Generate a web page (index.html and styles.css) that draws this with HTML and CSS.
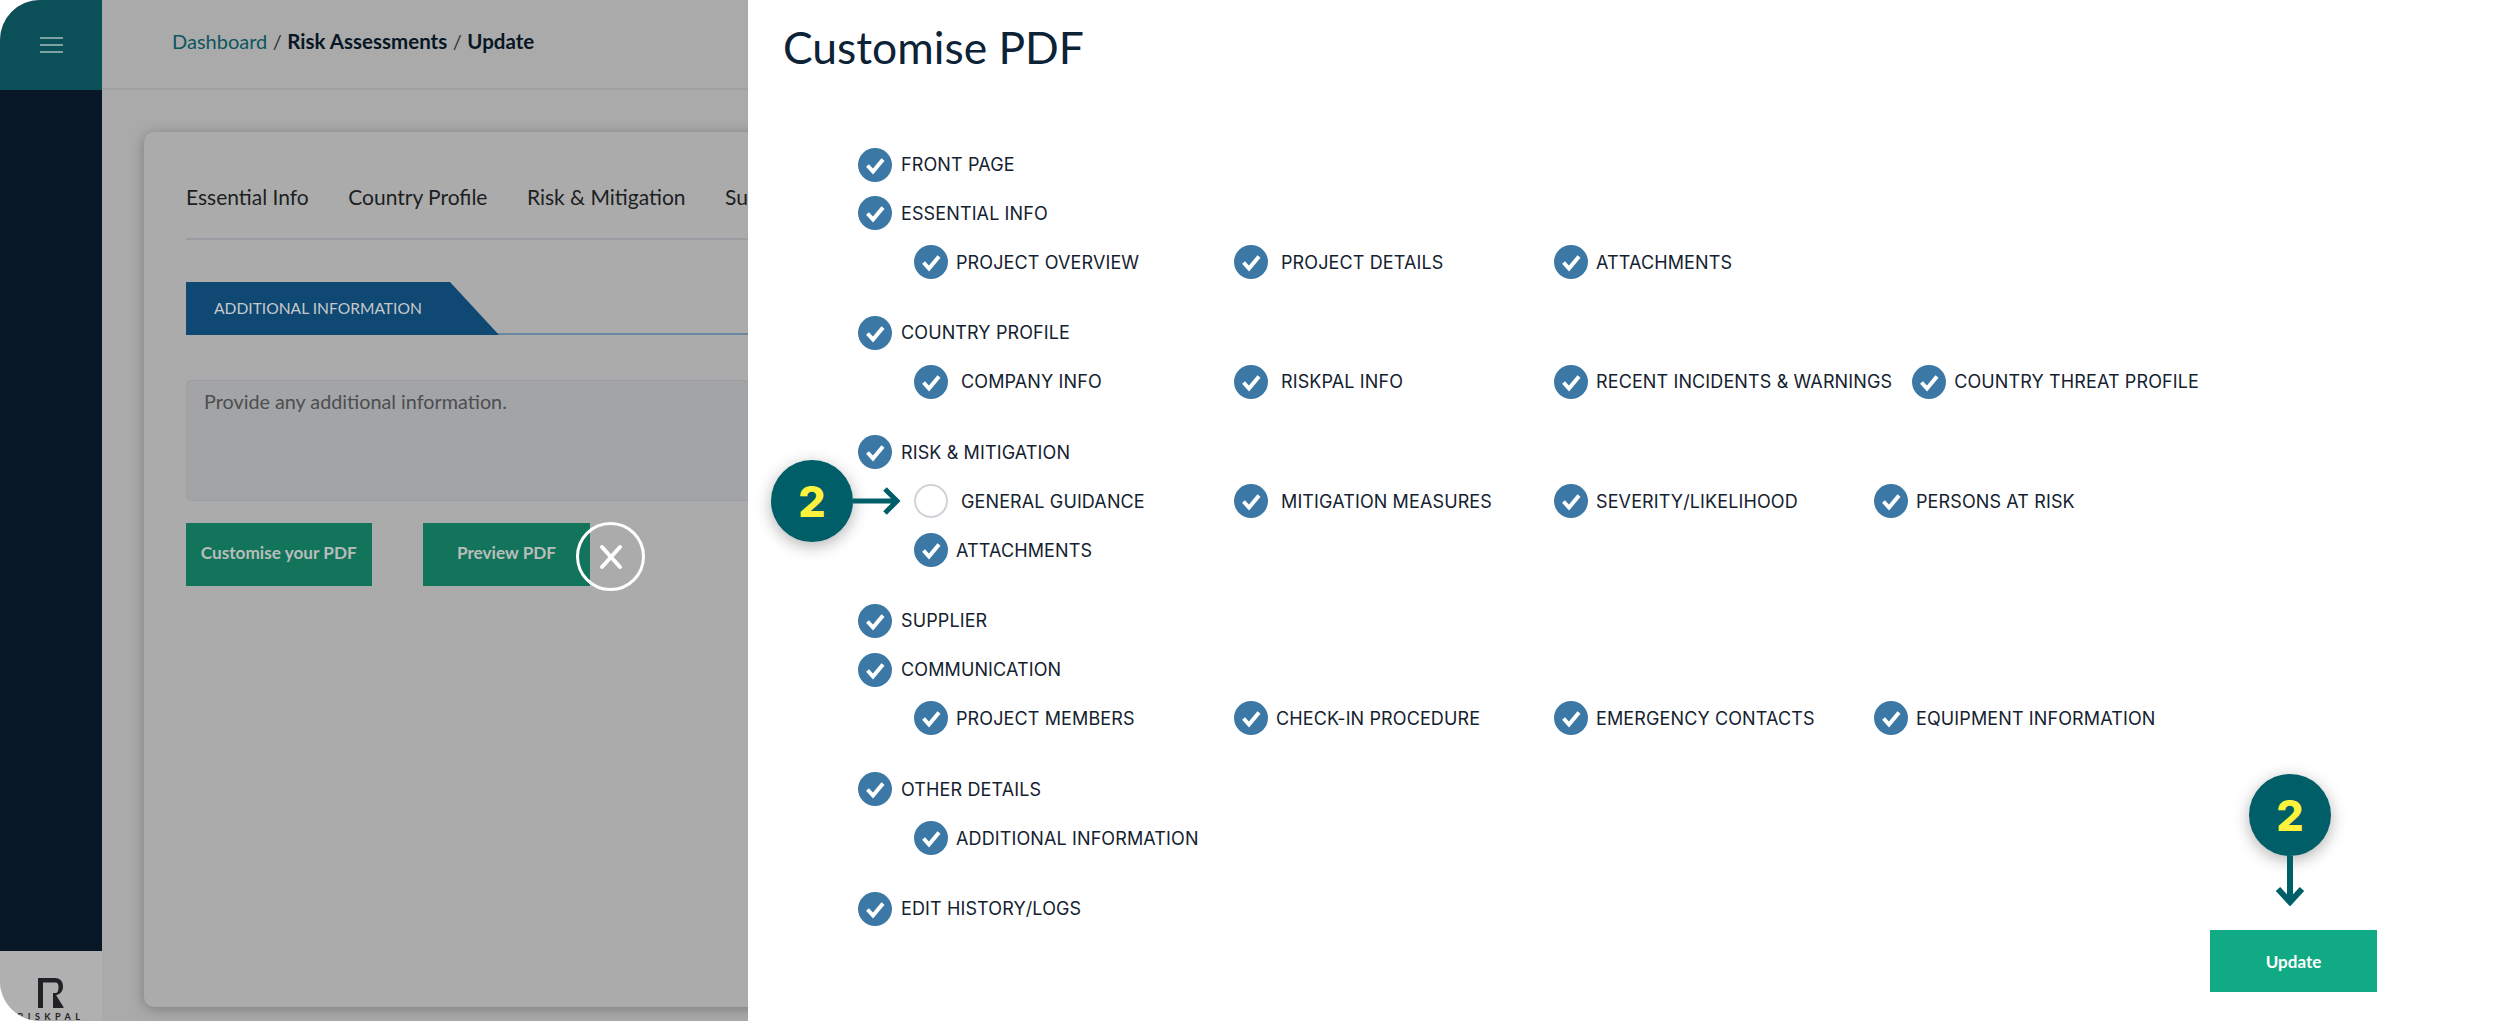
FILE: index.html
```html
<!DOCTYPE html>
<html lang="en">
<head>
  <meta charset="UTF-8">
  <title>Customise PDF</title>
  <link rel="stylesheet" href="styles.css">
</head>
<body>
  <div class="app">
    <!-- Left rail -->
    <aside class="sidebar">
      <div class="sidebar-head">
        <div class="burger"><span></span><span></span><span></span></div>
      </div>
      <div class="sidebar-fill"></div>
      <div class="sidebar-logo">
        <svg class="logo-mark" width="26" height="30" viewBox="0 0 26 30">
          <path d="M0 0H17C22.5 0 25 4 25 8.500C25 13 22.500 16.500 18 17L25.500 29V30H15V15H18C20 15 20.500 11.500 20.500 8.500C20.500 6 19.500 4.500 17 4.500H5V30H0Z" fill="#202226"/>
        </svg>
        <span class="logo-text">RISKPAL</span>
      </div>
    </aside>

    <!-- Page behind the drawer -->
    <main class="main">
      <div class="topbar">
        <a class="crumb-link">Dashboard</a>
        <span class="crumb-sep">/</span>
        <b>Risk Assessments</b>
        <span class="crumb-sep">/</span>
        <b>Update</b>
      </div>
      <section class="card">
        <nav class="tabs">
          <span>Essential Info</span>
          <span>Country Profile</span>
          <span>Risk &amp; Mitigation</span>
          <span>Supplier</span>
        </nav>
        <div class="section-head">
          <div class="section-tab">ADDITIONAL INFORMATION</div>
        </div>
        <div class="notes">Provide any additional information.</div>
        <div class="actions">
          <button class="btn-dim btn-customise">Customise your PDF</button>
          <button class="btn-dim btn-preview">Preview PDF</button>
        </div>
      </section>
    </main>

    <button class="drawer-close">
      <svg width="26" height="26" viewBox="0 0 26 26"><path d="M4 3L22 23M22 3L4 23" stroke="#fff" stroke-width="4" stroke-linecap="round" fill="none"/></svg>
    </button>

    <!-- Drawer -->
    <section class="drawer">
      <h1 class="drawer-title">Customise PDF</h1>
      <div class="check-list">
        <label class="check-item top">
          <svg class="check" viewBox="0 0 34 34"><circle cx="17" cy="17" r="17"/><path d="M9.500 17.500L15 23.500L25 11.500"/></svg>
          FRONT PAGE
        </label>
        <label class="check-item top">
          <svg class="check" viewBox="0 0 34 34"><circle cx="17" cy="17" r="17"/><path d="M9.500 17.500L15 23.500L25 11.500"/></svg>
          ESSENTIAL INFO
        </label>
        <div class="sub-list">
          <label class="check-item">
            <svg class="check" viewBox="0 0 34 34"><circle cx="17" cy="17" r="17"/><path d="M9.500 17.500L15 23.500L25 11.500"/></svg>
            PROJECT OVERVIEW
          </label>
          <label class="check-item wide">
            <svg class="check" viewBox="0 0 34 34"><circle cx="17" cy="17" r="17"/><path d="M9.500 17.500L15 23.500L25 11.500"/></svg>
            PROJECT DETAILS
          </label>
          <label class="check-item">
            <svg class="check" viewBox="0 0 34 34"><circle cx="17" cy="17" r="17"/><path d="M9.500 17.500L15 23.500L25 11.500"/></svg>
            ATTACHMENTS
          </label>
        </div>

        <label class="check-item top">
          <svg class="check" viewBox="0 0 34 34"><circle cx="17" cy="17" r="17"/><path d="M9.500 17.500L15 23.500L25 11.500"/></svg>
          COUNTRY PROFILE
        </label>
        <div class="sub-list">
          <label class="check-item wide">
            <svg class="check" viewBox="0 0 34 34"><circle cx="17" cy="17" r="17"/><path d="M9.500 17.500L15 23.500L25 11.500"/></svg>
            COMPANY INFO
          </label>
          <label class="check-item wide">
            <svg class="check" viewBox="0 0 34 34"><circle cx="17" cy="17" r="17"/><path d="M9.500 17.500L15 23.500L25 11.500"/></svg>
            RISKPAL INFO
          </label>
          <label class="check-item">
            <svg class="check" viewBox="0 0 34 34"><circle cx="17" cy="17" r="17"/><path d="M9.500 17.500L15 23.500L25 11.500"/></svg>
            RECENT INCIDENTS &amp; WARNINGS
          </label>
          <label class="check-item">
            <svg class="check" viewBox="0 0 34 34"><circle cx="17" cy="17" r="17"/><path d="M9.500 17.500L15 23.500L25 11.500"/></svg>
            COUNTRY THREAT PROFILE
          </label>
        </div>

        <label class="check-item top">
          <svg class="check" viewBox="0 0 34 34"><circle cx="17" cy="17" r="17"/><path d="M9.500 17.500L15 23.500L25 11.500"/></svg>
          RISK &amp; MITIGATION
        </label>
        <div class="sub-list">
          <label class="check-item wide">
            <span class="check-empty"></span>
            GENERAL GUIDANCE
          </label>
          <label class="check-item wide">
            <svg class="check" viewBox="0 0 34 34"><circle cx="17" cy="17" r="17"/><path d="M9.500 17.500L15 23.500L25 11.500"/></svg>
            MITIGATION MEASURES
          </label>
          <label class="check-item">
            <svg class="check" viewBox="0 0 34 34"><circle cx="17" cy="17" r="17"/><path d="M9.500 17.500L15 23.500L25 11.500"/></svg>
            SEVERITY/LIKELIHOOD
          </label>
          <label class="check-item">
            <svg class="check" viewBox="0 0 34 34"><circle cx="17" cy="17" r="17"/><path d="M9.500 17.500L15 23.500L25 11.500"/></svg>
            PERSONS AT RISK
          </label>
          <label class="check-item">
            <svg class="check" viewBox="0 0 34 34"><circle cx="17" cy="17" r="17"/><path d="M9.500 17.500L15 23.500L25 11.500"/></svg>
            ATTACHMENTS
          </label>
        </div>

        <label class="check-item top">
          <svg class="check" viewBox="0 0 34 34"><circle cx="17" cy="17" r="17"/><path d="M9.500 17.500L15 23.500L25 11.500"/></svg>
          SUPPLIER
        </label>
        <label class="check-item top">
          <svg class="check" viewBox="0 0 34 34"><circle cx="17" cy="17" r="17"/><path d="M9.500 17.500L15 23.500L25 11.500"/></svg>
          COMMUNICATION
        </label>
        <div class="sub-list">
          <label class="check-item">
            <svg class="check" viewBox="0 0 34 34"><circle cx="17" cy="17" r="17"/><path d="M9.500 17.500L15 23.500L25 11.500"/></svg>
            PROJECT MEMBERS
          </label>
          <label class="check-item">
            <svg class="check" viewBox="0 0 34 34"><circle cx="17" cy="17" r="17"/><path d="M9.500 17.500L15 23.500L25 11.500"/></svg>
            CHECK-IN PROCEDURE
          </label>
          <label class="check-item">
            <svg class="check" viewBox="0 0 34 34"><circle cx="17" cy="17" r="17"/><path d="M9.500 17.500L15 23.500L25 11.500"/></svg>
            EMERGENCY CONTACTS
          </label>
          <label class="check-item">
            <svg class="check" viewBox="0 0 34 34"><circle cx="17" cy="17" r="17"/><path d="M9.500 17.500L15 23.500L25 11.500"/></svg>
            EQUIPMENT INFORMATION
          </label>
        </div>

        <label class="check-item top">
          <svg class="check" viewBox="0 0 34 34"><circle cx="17" cy="17" r="17"/><path d="M9.500 17.500L15 23.500L25 11.500"/></svg>
          OTHER DETAILS
        </label>
        <div class="sub-list">
          <label class="check-item">
            <svg class="check" viewBox="0 0 34 34"><circle cx="17" cy="17" r="17"/><path d="M9.500 17.500L15 23.500L25 11.500"/></svg>
            ADDITIONAL INFORMATION
          </label>
        </div>

        <label class="check-item top last">
          <svg class="check" viewBox="0 0 34 34"><circle cx="17" cy="17" r="17"/><path d="M9.500 17.500L15 23.500L25 11.500"/></svg>
          EDIT HISTORY/LOGS
        </label>
      </div>
      <button class="btn-update">Update</button>
    </section>

    <!-- Tutorial callouts -->
    <div class="callout callout-left">
      <span class="callout-badge">2</span>
      <svg class="callout-arrow" width="48" height="30" viewBox="0 0 48 30"><path d="M0 15H44M32 3L44 15L32 27" stroke="#005e68" stroke-width="5" fill="none"/></svg>
    </div>
    <div class="callout callout-down">
      <span class="callout-badge">2</span>
      <svg class="callout-arrow" width="30" height="50" viewBox="0 0 30 50"><path d="M15 0V46M3 33L15 46L27 33" stroke="#005e68" stroke-width="6" fill="none"/></svg>
    </div>
  </div>
</body>
</html>
```

FILE: styles.css
```css
* {
  box-sizing: border-box;
  margin: 0;
  padding: 0;
}
html, body {
  height: 100%;
  background: #fff;
  overflow: hidden;
}
body {
  font-family: Lato, "Open Sans", sans-serif;
}
button {
  border: none;
  font-family: inherit;
}

.app {
  position: relative;
  display: flex;
  width: 2500px;
  height: 1021px;
  border-radius: 40px 0 0 40px;
  overflow: hidden;
  background: #aaaaaa;
}

/* Left rail */
.sidebar {
  display: flex;
  flex-direction: column;
  flex: 0 0 102px;
}
.sidebar-head {
  display: flex;
  align-items: center;
  justify-content: center;
  height: 90px;
  background: #0b5058;
}
.burger {
  display: flex;
  flex-direction: column;
  gap: 5px;
  width: 23px;
}
.burger span {
  height: 2px;
  background: #7fa0a4;
}
.sidebar-fill {
  flex: 1;
  background: #081725;
}
.sidebar-logo {
  display: flex;
  flex-direction: column;
  align-items: center;
  height: 70px;
  padding-top: 27px;
  background: #b0b0b0;
}
.logo-mark {
  flex: none;
}
.logo-text {
  margin-top: 4px;
  font-size: 9px;
  line-height: 9px;
  font-weight: 700;
  letter-spacing: 4.500px;
  color: #202226;
}

/* Page behind the drawer */
.main {
  flex: 1;
  min-width: 0;
}
.topbar {
  display: flex;
  align-items: center;
  gap: 5.500px;
  height: 90px;
  padding: 0 0 6px 70px;
  border-bottom: 2px solid #a0a0a0;
  font-size: 20px;
  color: #081725;
}
.topbar b {
  font-size: 20.500px;
}
.crumb-link {
  color: #0c5660;
}
.crumb-sep {
  color: #333;
}
.card {
  height: 875px;
  margin: 42px 0 0 42px;
  padding: 0 0 0 42px;
  background: #ababab;
  border-radius: 10px 0 0 10px;
  box-shadow: 0 2px 14px rgba(0, 0, 0, 0.28);
}
.tabs {
  display: flex;
  gap: 39.500px;
  height: 108px;
  padding-top: 52px;
  border-bottom: 2px solid #9a9ca2;
  font-size: 21px;
  color: #1c1f22;
  white-space: nowrap;
}
.section-head {
  margin-top: 42px;
  height: 53px;
  border-bottom: 2px solid #6b87a0;
}
.section-tab {
  width: 313px;
  height: 53px;
  padding: 17px 0 0 28px;
  font-size: 15.600px;
  color: #c6c8ca;
  background: #0e4873;
  clip-path: polygon(0 0, 264px 0, 100% 100%, 0 100%);
}
.notes {
  height: 121px;
  margin-top: 45px;
  padding: 8px 17px;
  border: 1px solid #9a9da3;
  border-right: none;
  border-radius: 6px 0 0 6px;
  background: #a3a4a6;
  font-size: 19.800px;
  color: #4c4e50;
}
.actions {
  display: flex;
  gap: 51.500px;
  margin-top: 22px;
}
.btn-dim {
  height: 63px;
  padding-bottom: 5px;
  background: #13745c;
  color: #b9bdba;
  font-size: 17.200px;
  font-weight: 700;
}
.btn-customise {
  width: 185.500px;
}
.btn-preview {
  width: 167px;
}
.drawer-close {
  position: absolute;
  left: 576px;
  top: 522px;
  display: flex;
  align-items: center;
  justify-content: center;
  width: 69px;
  height: 69px;
  border: 3px solid #fff;
  border-radius: 50%;
  background: transparent;
}

/* Drawer */
.drawer {
  position: absolute;
  top: 0;
  right: 0;
  bottom: 0;
  left: 748px;
  display: flex;
  flex-direction: column;
  background: #fff;
}
.drawer-title {
  height: 50px;
  margin: 22px 0 0 35px;
  font-size: 44.400px;
  line-height: 50px;
  font-weight: 400;
  color: #0c2236;
}
.check-list {
  display: flex;
  flex-direction: column;
  margin: 75.500px 0 0 110px;
}
.check-item {
  display: flex;
  align-items: center;
  gap: 8px;
  height: 34px;
  font-family: Inter, sans-serif;
  font-size: 18px;
  letter-spacing: 0.120px;
  color: #14222f;
  white-space: nowrap;
}
.check-item.top {
  gap: 9px;
  margin-bottom: 14.800px;
}
.check-item.top.last {
  margin-bottom: 0;
}
.check-item.wide {
  gap: 13px;
}
.check {
  flex: none;
  width: 34px;
  height: 34px;
}
.check circle {
  fill: #3b78a6;
}
.check path {
  fill: none;
  stroke: #fff;
  stroke-width: 4;
}
.check-empty {
  flex: none;
  width: 34px;
  height: 34px;
  border: 2px solid #d0d4d8;
  border-radius: 50%;
}
.sub-list {
  display: flex;
  flex-wrap: wrap;
  row-gap: 14.800px;
  width: 1400px;
  margin: 0 0 36.800px 56px;
}
.sub-list .check-item {
  min-width: 320px;
  padding-right: 20px;
}
.btn-update {
  align-self: flex-end;
  width: 167px;
  height: 62px;
  margin: 4.500px 123px 0 0;
  background: #10aa84;
  color: #fff;
  font-size: 17px;
  font-weight: 700;
}

/* Tutorial callouts */
.callout {
  position: absolute;
  display: flex;
  align-items: center;
}
.callout-badge {
  display: flex;
  align-items: center;
  justify-content: center;
  flex: none;
  width: 82px;
  height: 82px;
  border-radius: 50%;
  background: #005e68;
  color: #fff23c;
  font-family: Inter, sans-serif;
  font-size: 43px;
  font-weight: 800;
  box-shadow: 0 4px 16px rgba(0, 0, 0, 0.3);
}
.callout-left {
  left: 771px;
  top: 460px;
}
.callout-down {
  left: 2249px;
  top: 774px;
  flex-direction: column;
}
```
